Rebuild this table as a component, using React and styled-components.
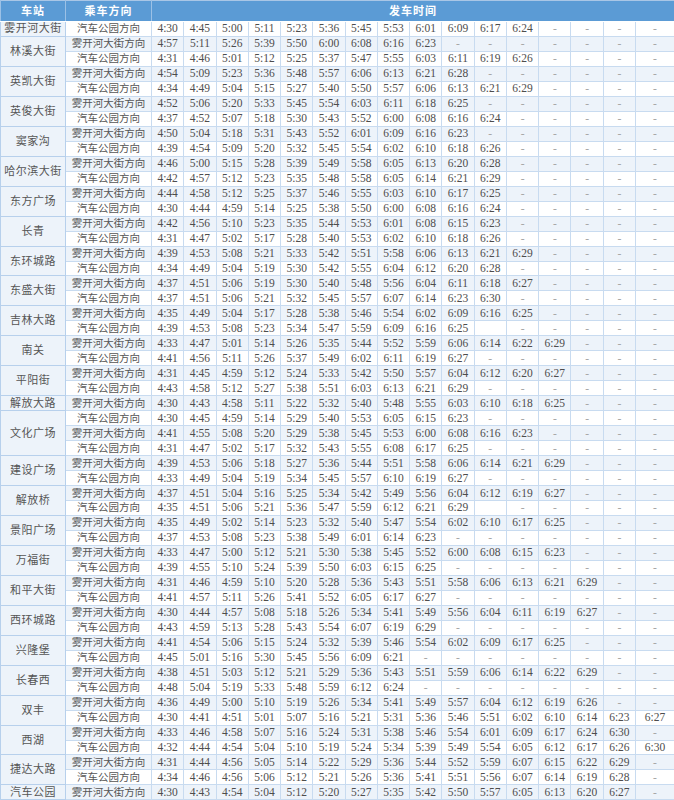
import React from "react";
import styled, { createGlobalStyle } from "styled-components";

const W = "雾开河大街方向";
const Q = "汽车公园方向";

// "_" marks an empty cell; rows are padded with "-" up to 16 columns
const groups = [
  ["雾开河大街", [[Q, "4:30 4:45 5:00 5:11 5:23 5:36 5:45 5:53 6:01 6:09 6:17 6:24"]]],
  ["林溪大街", [
    [W, "4:57 5:11 5:26 5:39 5:50 6:00 6:08 6:16 6:23"],
    [Q, "4:31 4:46 5:01 5:12 5:25 5:37 5:47 5:55 6:03 6:11 6:19 6:26"],
  ]],
  ["英凯大街", [
    [W, "4:54 5:09 5:23 5:36 5:48 5:57 6:06 6:13 6:21 6:28"],
    [Q, "4:34 4:49 5:04 5:15 5:27 5:40 5:50 5:57 6:06 6:13 6:21 6:29"],
  ]],
  ["英俊大街", [
    [W, "4:52 5:06 5:20 5:33 5:45 5:54 6:03 6:11 6:18 6:25"],
    [Q, "4:37 4:52 5:07 5:18 5:30 5:43 5:52 6:00 6:08 6:16 6:24"],
  ]],
  ["窦家沟", [
    [W, "4:50 5:04 5:18 5:31 5:43 5:52 6:01 6:09 6:16 6:23"],
    [Q, "4:39 4:54 5:09 5:20 5:32 5:45 5:54 6:02 6:10 6:18 6:26"],
  ]],
  ["哈尔滨大街", [
    [W, "4:46 5:00 5:15 5:28 5:39 5:49 5:58 6:05 6:13 6:20 6:28"],
    [Q, "4:42 4:57 5:12 5:23 5:35 5:48 5:58 6:05 6:14 6:21 6:29"],
  ]],
  ["东方广场", [
    [W, "4:44 4:58 5:12 5:25 5:37 5:46 5:55 6:03 6:10 6:17 6:25"],
    [Q, "4:30 4:44 4:59 5:14 5:25 5:38 5:50 6:00 6:08 6:16 6:24"],
  ]],
  ["长青", [
    [W, "4:42 4:56 5:10 5:23 5:35 5:44 5:53 6:01 6:08 6:15 6:23"],
    [Q, "4:31 4:47 5:02 5:17 5:28 5:40 5:53 6:02 6:10 6:18 6:26"],
  ]],
  ["东环城路", [
    [W, "4:39 4:53 5:08 5:21 5:33 5:42 5:51 5:58 6:06 6:13 6:21 6:29"],
    [Q, "4:34 4:49 5:04 5:19 5:30 5:42 5:55 6:04 6:12 6:20 6:28"],
  ]],
  ["东盛大街", [
    [W, "4:37 4:51 5:06 5:19 5:30 5:40 5:48 5:56 6:04 6:11 6:18 6:27"],
    [Q, "4:37 4:51 5:06 5:21 5:32 5:45 5:57 6:07 6:14 6:23 6:30"],
  ]],
  ["吉林大路", [
    [W, "4:35 4:49 5:04 5:17 5:28 5:38 5:46 5:54 6:02 6:09 6:16 6:25"],
    [Q, "4:39 4:53 5:08 5:23 5:34 5:47 5:59 6:09 6:16 6:25 _"],
  ]],
  ["南关", [
    [W, "4:33 4:47 5:01 5:14 5:26 5:35 5:44 5:52 5:59 6:06 6:14 6:22 6:29"],
    [Q, "4:41 4:56 5:11 5:26 5:37 5:49 6:02 6:11 6:19 6:27"],
  ]],
  ["平阳街", [
    [W, "4:31 4:45 4:59 5:12 5:24 5:33 5:42 5:50 5:57 6:04 6:12 6:20 6:27"],
    [Q, "4:43 4:58 5:12 5:27 5:38 5:51 6:03 6:13 6:21 6:29"],
  ]],
  ["解放大路", [[W, "4:30 4:43 4:58 5:11 5:22 5:32 5:40 5:48 5:55 6:03 6:10 6:18 6:25"]]],
  ["文化广场", [
    [Q, "4:30 4:45 4:59 5:14 5:29 5:40 5:53 6:05 6:15 6:23"],
    [W, "4:41 4:55 5:08 5:20 5:29 5:38 5:45 5:53 6:00 6:08 6:16 6:23"],
    [Q, "4:31 4:47 5:02 5:17 5:32 5:43 5:55 6:08 6:17 6:25"],
  ]],
  ["建设广场", [
    [W, "4:39 4:53 5:06 5:18 5:27 5:36 5:44 5:51 5:58 6:06 6:14 6:21 6:29"],
    [Q, "4:33 4:49 5:04 5:19 5:34 5:45 5:57 6:10 6:19 6:27"],
  ]],
  ["解放桥", [
    [W, "4:37 4:51 5:04 5:16 5:25 5:34 5:42 5:49 5:56 6:04 6:12 6:19 6:27"],
    [Q, "4:35 4:51 5:06 5:21 5:36 5:47 5:59 6:12 6:21 6:29 _"],
  ]],
  ["景阳广场", [
    [W, "4:35 4:49 5:02 5:14 5:23 5:32 5:40 5:47 5:54 6:02 6:10 6:17 6:25"],
    [Q, "4:37 4:53 5:08 5:23 5:38 5:49 6:01 6:14 6:23"],
  ]],
  ["万福街", [
    [W, "4:33 4:47 5:00 5:12 5:21 5:30 5:38 5:45 5:52 6:00 6:08 6:15 6:23"],
    [Q, "4:39 4:55 5:10 5:24 5:39 5:50 6:03 6:15 6:25"],
  ]],
  ["和平大街", [
    [W, "4:31 4:46 4:59 5:10 5:20 5:28 5:36 5:43 5:51 5:58 6:06 6:13 6:21 6:29"],
    [Q, "4:41 4:57 5:11 5:26 5:41 5:52 6:05 6:17 6:27"],
  ]],
  ["西环城路", [
    [W, "4:30 4:44 4:57 5:08 5:18 5:26 5:34 5:41 5:49 5:56 6:04 6:11 6:19 6:27"],
    [Q, "4:43 4:59 5:13 5:28 5:43 5:54 6:07 6:19 6:29"],
  ]],
  ["兴隆堡", [
    [W, "4:41 4:54 5:06 5:15 5:24 5:32 5:39 5:46 5:54 6:02 6:09 6:17 6:25"],
    [Q, "4:45 5:01 5:16 5:30 5:45 5:56 6:09 6:21"],
  ]],
  ["长春西", [
    [W, "4:38 4:51 5:03 5:12 5:21 5:29 5:36 5:43 5:51 5:59 6:06 6:14 6:22 6:29"],
    [Q, "4:48 5:04 5:19 5:33 5:48 5:59 6:12 6:24"],
  ]],
  ["双丰", [
    [W, "4:36 4:49 5:00 5:10 5:19 5:26 5:34 5:41 5:49 5:57 6:04 6:12 6:19 6:26"],
    [Q, "4:30 4:41 4:51 5:01 5:07 5:16 5:21 5:31 5:36 5:46 5:51 6:02 6:10 6:14 6:23 6:27"],
  ]],
  ["西湖", [
    [W, "4:33 4:46 4:58 5:07 5:16 5:24 5:31 5:38 5:46 5:54 6:01 6:09 6:17 6:24 6:30"],
    [Q, "4:32 4:44 4:54 5:04 5:10 5:19 5:24 5:34 5:39 5:49 5:54 6:05 6:12 6:17 6:26 6:30"],
  ]],
  ["捷达大路", [
    [W, "4:31 4:44 4:56 5:05 5:14 5:22 5:29 5:36 5:44 5:52 5:59 6:07 6:15 6:22 6:29"],
    [Q, "4:34 4:46 4:56 5:06 5:12 5:21 5:26 5:36 5:41 5:51 5:56 6:07 6:14 6:19 6:28"],
  ]],
  ["汽车公园", [[W, "4:30 4:43 4:54 5:04 5:12 5:20 5:27 5:35 5:42 5:50 5:57 6:05 6:13 6:20 6:27"]]],
];

const fill = (s) => {
  const v = s.split(" ");
  while (v.length < 16) v.push("-");
  return v.map((x) => (x === "_" ? "" : x));
};

const GlobalStyle = createGlobalStyle`
  body {
    margin: 0;
    background: #fff;
  }
`;

const Table = styled.table`
  width: 674px;
  table-layout: fixed;
  border-collapse: collapse;
  font-family: "Liberation Serif", "Noto Sans CJK SC", serif;
  color: #4d4d4d;
  border: 1px solid #a9c6e6;
`;

const HeadCell = styled.th`
  height: 20px;
  padding: 0;
  background: #5b9bd5;
  color: #fff;
  font-size: 11px;
  font-weight: 600;
  line-height: 20px;
  text-align: center;
  border-left: 1px solid #9cc1e6;
  border-bottom: 1px solid #fff;
  letter-spacing: 1px;
`;

const Row = styled.tr`
  background: ${(p) => (p.$alt ? "#edf3fa" : "#fff")};
`;

const StationCell = styled.td`
  padding: 0;
  background: #edf3fa;
  border: 1px solid #b7d0ec;
  text-align: center;
  font-size: 11px;
  line-height: 13px;
  letter-spacing: 0.5px;
  white-space: nowrap;
  color: #555;
`;

const DirCell = styled.td`
  height: 13.97px;
  padding: 0;
  border: 1px solid #c8dbf0;
  text-align: center;
  font-size: 10.5px;
  line-height: 13px;
  white-space: nowrap;
  color: #555;
`;

const TimeCell = styled.td`
  height: 13.97px;
  padding: 0;
  border: 1px solid #c8dbf0;
  border-left-color: ${(p) => (p.$last ? "#8fb2da" : "#c8dbf0")};
  text-align: center;
  font-size: 11.5px;
  line-height: 13px;
  white-space: nowrap;
  color: ${(p) => (p.$dash ? "#a8a8a8" : "#4d4d4d")};
`;

export default function App() {
  return (
    <>
      <GlobalStyle />
      <Table>
        <colgroup>
          <col style={{ width: 65 }} />
          <col style={{ width: 86 }} />
          {Array.from({ length: 15 }).map((_, i) => (
            <col key={i} style={{ width: 32.27 }} />
          ))}
          <col style={{ width: 39 }} />
        </colgroup>
        <thead>
          <tr>
            <HeadCell>车站</HeadCell>
            <HeadCell>乘车方向</HeadCell>
            <HeadCell colSpan={16}>发车时间</HeadCell>
          </tr>
        </thead>
        <tbody>
          {groups.map(([name, rows]) =>
            rows.map(([dir, t], i) => (
              <Row key={name + i} $alt={dir === W}>
                {i === 0 && (
                  <StationCell rowSpan={rows.length}>{name}</StationCell>
                )}
                <DirCell>{dir}</DirCell>
                {fill(t).map((v, j) => (
                  <TimeCell key={j} $dash={v === "-"} $last={j === 15}>
                    {v}
                  </TimeCell>
                ))}
              </Row>
            ))
          )}
        </tbody>
      </Table>
    </>
  );
}
